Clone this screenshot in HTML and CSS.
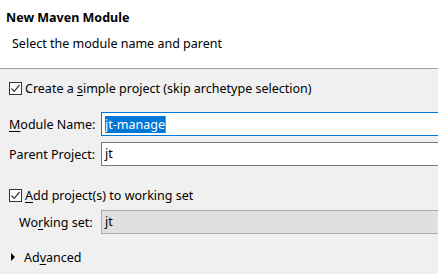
FILE: index.html
```html
<!DOCTYPE html>
<html lang="en">
<head>
    <meta charset="UTF-8">
    <title>New Maven Module</title>
    <link rel="stylesheet" href="styles.css">
</head>
<body>
    <div class="header">
        <div class="title">New Maven Module</div>
        <div class="subtitle">Select the module name and parent</div>
    </div>

    <div class="content">
        <label class="check-row first">
            <span class="box">
                <svg width="11" height="11" viewBox="0 0 11 11"><path d="M1.5 5.5 L4.2 8.3 L9.5 2" fill="none" stroke="#333" stroke-width="1.2"/></svg>
            </span>
            <span>Create a <u>s</u>imple project (skip archetype selection)</span>
        </label>

        <div class="field-row module">
            <span class="label"><u>M</u>odule Name:</span>
            <div class="input active"><span class="sel">jt-manage</span><span class="caret"></span></div>
        </div>

        <div class="field-row">
            <span class="label">Parent Project:</span>
            <div class="input">jt</div>
        </div>

        <label class="check-row second">
            <span class="box">
                <svg width="11" height="11" viewBox="0 0 11 11"><path d="M1.5 5.5 L4.2 8.3 L9.5 2" fill="none" stroke="#333" stroke-width="1.2"/></svg>
            </span>
            <span><u>A</u>dd project(s) to working set</span>
        </label>

        <div class="field-row indent">
            <span class="label">Wo<u>r</u>king set:</span>
            <div class="input disabled">jt</div>
        </div>

        <div class="advanced">
            <span class="arrow"></span>
            <span>Ad<u>v</u>anced</span>
        </div>
    </div>
</body>
</html>
```

FILE: styles.css
```css
/* Wizard page */
body {
    margin: 0;
    font-family: "Noto Sans", "Open Sans", Arial, sans-serif;
    font-size: 12.5px;
    color: #000;
    background: #f0f0f0;
    overflow: hidden;
}

.header {
    height: 68px;
    background: #fff;
    border-bottom: 1px solid #a0a0a0;
    padding: 0 0 0 6px;
}

.title {
    font-weight: bold;
    padding-top: 8px;
    line-height: 20px;
}

.subtitle {
    padding: 6px 0 0 6px;
    line-height: 20px;
}

.content {
    padding: 0 0 0 9px;
}

u {
    text-decoration-thickness: 1px;
    text-underline-offset: 2px;
}

.check-row {
    display: flex;
    align-items: center;
    gap: 3px;
    height: 20px;
}

.check-row.first {
    margin-top: 9px;
}

.check-row.second {
    margin-top: 19px;
}

.box {
    width: 11px;
    height: 11px;
    border: 1px solid #333;
    background: #fff;
    display: flex;
}

.field-row {
    display: flex;
    align-items: center;
    height: 24px;
    margin-top: 6px;
}

.field-row.module {
    margin-top: 14px;
}

.field-row.indent {
    padding-left: 10px;
    margin-top: 5px;
}

.field-row .label {
    width: 92px;
    flex-shrink: 0;
}

.field-row.indent .label {
    width: 82px;
}

.input {
    flex: 1;
    height: 22px;
    line-height: 22px;
    border: 1px solid #7a7a7a;
    border-right: none;
    background: #fff;
    padding-left: 3px;
    display: flex;
    align-items: center;
}

.input.active {
    border-color: #0078d7;
}

.input.disabled {
    background: #e0e0e0;
    border-color: #adadad;
}

.sel {
    background: #0078d7;
    color: #fff;
    line-height: 17px;
}

.caret {
    width: 1px;
    height: 17px;
    background: #f08000;
}

.advanced {
    display: flex;
    align-items: center;
    gap: 9px;
    height: 20px;
    margin-top: 13px;
    padding-left: 2px;
}

.arrow {
    width: 0;
    height: 0;
    border-top: 4px solid transparent;
    border-bottom: 4px solid transparent;
    border-left: 4px solid #000;
}
```
